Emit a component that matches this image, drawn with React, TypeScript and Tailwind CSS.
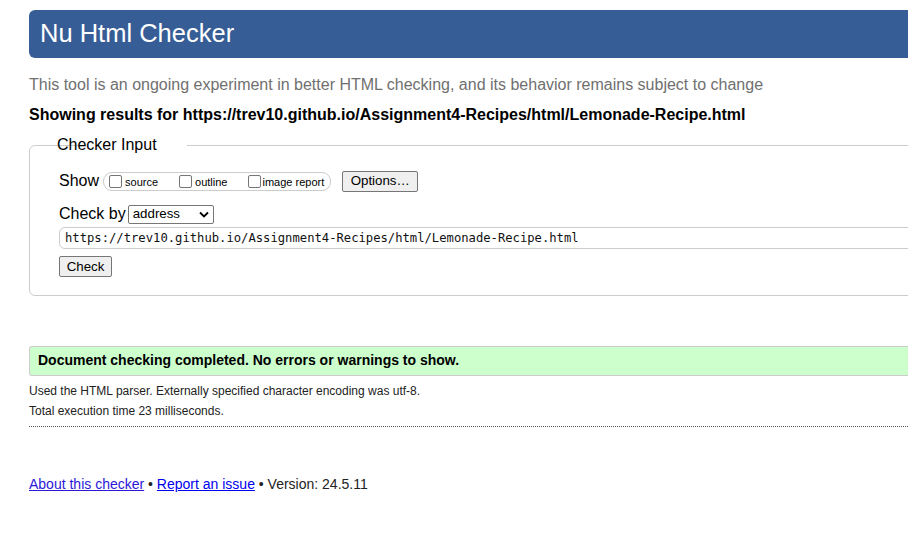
export default function App() {
  return (
    <div className="w-full h-[555px] overflow-hidden bg-white font-['Liberation_Sans',Arial,sans-serif] text-black">
      <div className="w-[1100px] pl-[29px] pt-[10px]">
        <header className="h-[48px] bg-[#365d95] rounded-l-[6px] flex items-center pl-[11px]">
          <h1 className="text-[25.5px] text-white leading-none">Nu Html Checker</h1>
        </header>

        <p className="mt-[17px] text-[16px] text-[#707070] leading-[20px]">
          This tool is an ongoing experiment in better HTML checking, and its behavior remains subject to change
        </p>
        <p className="mt-[10px] text-[16px] font-bold leading-[20px]">
          Showing results for https://trev10.github.io/Assignment4-Recipes/html/Lemonade-Recipe.html
        </p>

        <fieldset className="mt-[10px] border border-[#cccccc] rounded-l-[6px] pl-[29px] pb-[17px]">
          <legend className="text-[16px] px-[1px] ml-[26px] -translate-x-[29px] leading-[20px]">Checker Input</legend>

          <div className="flex items-center mt-[15px] h-[22px]">
            <span className="text-[16px]">Show</span>
            <div className="ml-[4px] h-[19px] border border-[#cccccc] rounded-[9px] flex items-center pl-[5px] pr-[6px] text-[11px]">
              <label className="flex items-center">
                <span className="w-[13px] h-[13px] border border-[#767676] rounded-[2px] bg-white" />
                <span className="ml-[3px] mt-[2px]">source</span>
              </label>
              <label className="flex items-center ml-[21px]">
                <span className="w-[13px] h-[13px] border border-[#767676] rounded-[2px] bg-white" />
                <span className="ml-[3px] mt-[2px]">outline</span>
              </label>
              <label className="flex items-center ml-[21px]">
                <span className="w-[13px] h-[13px] border border-[#767676] rounded-[2px] bg-white" />
                <span className="ml-[1px] mt-[2px]">image report</span>
              </label>
            </div>
            <button className="ml-[11px] h-[21px] w-[76px] border border-[#767676] rounded-[2px] bg-[#efefef] text-[13.3px] leading-none">
              Options…
            </button>
          </div>

          <div className="flex items-center mt-[12px] h-[20px]">
            <span className="text-[16px]">Check by</span>
            <div className="ml-[2px] w-[86px] h-[19px] border border-[#767676] rounded-[2px] bg-white flex items-center justify-between pl-[4px] pr-[4px] text-[13.3px]">
              <span>address</span>
              <svg width="10" height="7" viewBox="0 0 10 7" fill="none">
                <path d="M1 1.5 L5 5.5 L9 1.5" stroke="#000" strokeWidth="1.8" />
              </svg>
            </div>
          </div>

          <div className="mt-[3px] h-[22px] border border-[#cccccc] rounded-l-[6px] flex items-center pl-[5px] font-['DejaVu_Sans_Mono',monospace] text-[12.2px] text-[#111]">
            https://trev10.github.io/Assignment4-Recipes/html/Lemonade-Recipe.html
          </div>

          <button className="mt-[7px] h-[21px] w-[53px] border border-[#767676] rounded-[2px] bg-[#efefef] text-[13.3px] leading-none">
            Check
          </button>
        </fieldset>

        <div className="mt-[50px] h-[30px] bg-[#ccffcc] border-y border-[#cccccc] border-l rounded-l-[3px] flex items-center pl-[8px]">
          <span className="text-[14px] font-bold">Document checking completed. No errors or warnings to show.</span>
        </div>

        <p className="mt-[8px] text-[12px] text-[#222] leading-[14px]">
          Used the HTML parser. Externally specified character encoding was utf-8.
        </p>
        <p className="mt-[6px] text-[12px] text-[#222] leading-[14px]">Total execution time 23 milliseconds.</p>
        <div className="mt-[8px] border-t border-dotted border-[#555]" />

        <p className="mt-[48px] text-[14px] text-[#222] leading-[18px]">
          <a href="#" className="text-[#2b18d8] underline">About this checker</a>
          {" • "}
          <a href="#" className="text-[#0000ee] underline">Report an issue</a>
          {" • Version: 24.5.11"}
        </p>
      </div>
    </div>
  );
}
